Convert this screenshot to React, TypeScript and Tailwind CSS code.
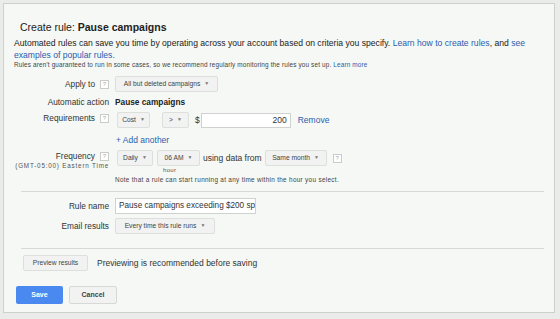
import { ReactNode } from "react";

function Help() {
  return (
    <span className="ml-[5px] inline-flex h-[9px] w-[9px] shrink-0 items-center justify-center border border-[#c9cdc9] bg-white text-[6px] leading-none text-[#aaa]">
      ?
    </span>
  );
}

function Caret() {
  return <span className="ml-[4px] text-[5px] text-[#777]">▼</span>;
}

function Btn({ children, className = "" }: { children: ReactNode; className?: string }) {
  return (
    <div
      className={`flex h-[16px] shrink-0 items-center justify-center whitespace-nowrap rounded-[2px] border border-[#dcdfdc] bg-[#f1f2f1] text-[6.7px] text-[#444] ${className}`}
    >
      {children}
    </div>
  );
}

function Row({
  label,
  help,
  sub,
  children,
  className = "",
}: {
  label: string;
  help?: boolean;
  sub?: string;
  children: ReactNode;
  className?: string;
}) {
  return (
    <div className={`flex ${className}`}>
      <div className="flex w-[95px] shrink-0 flex-col items-end">
        <div className="flex items-center whitespace-nowrap text-[8.3px] leading-[12px] text-[#333]">
          {label}
          {help ? <Help /> : null}
        </div>
        {sub && (
          <div className="whitespace-nowrap text-[6.3px] leading-[7px] tracking-[0.8px] text-[#555]">{sub}</div>
        )}
      </div>
      <div className="ml-[6px] flex-1">{children}</div>
    </div>
  );
}

export default function App() {
  return (
    <div className="h-[319px] w-[560px] bg-[#e9ece9] p-[3px] font-['Liberation_Sans',Arial,sans-serif]">
      <div className="h-[310px] w-[552px] border border-[#cdd1cd] bg-[#f5f8f4] px-[10px] pt-[17px]">
        <div className="ml-[6px] text-[10.5px] leading-[13px] text-[#222]">
          Create rule: <span className="font-bold">Pause campaigns</span>
        </div>
        <p className="mt-[3px] text-[8.6px] leading-[12px] text-[#222]">
          Automated rules can save you time by operating across your account based on criteria you specify.{" "}
          <span className="text-[#2a5db0]">Learn how to create rules</span>, and{" "}
          <span className="text-[#2a5db0]">see examples of popular rules.</span>
        </p>
        <p className="whitespace-nowrap text-[6.4px] leading-[7px] tracking-[0.15px] text-[#444]">
          Rules aren't guaranteed to run in some cases, so we recommend regularly monitoring the rules you set up.{" "}
          <span className="text-[#2a5db0]">Learn more</span>
        </p>

        <Row label="Apply to" help className="mt-[8px] items-center">
          <Btn className="w-[103px]">
            All but deleted campaigns <Caret />
          </Btn>
        </Row>

        <Row label="Automatic action" className="mt-[4px]">
          <div className="text-[8.3px] font-bold leading-[12px] text-[#222]">Pause campaigns</div>
        </Row>

        <Row label="Requirements" help className="mt-[4px]">
          <div className="flex items-center">
            <Btn className="ml-[2px] w-[33px]">
              Cost <Caret />
            </Btn>
            <Btn className="ml-[12px] w-[27px]">
              &gt; <Caret />
            </Btn>
            <span className="ml-[6px] text-[8.5px] text-[#333]">$</span>
            <div className="ml-[1px] flex h-[15px] w-[90px] items-center justify-end border border-[#cfd2cf] bg-white pr-[3px] text-[8.5px] text-[#333]">
              200
            </div>
            <span className="ml-[7px] text-[8.5px] text-[#2a5db0]">Remove</span>
          </div>
          <div className="ml-[1px] mt-[7px] text-[8.5px] leading-[11px] text-[#2a5db0]">+ Add another</div>
        </Row>

        <Row label="Frequency" help sub="(GMT-05:00) Eastern Time" className="mt-[4px]">
          <div className="flex items-center">
            <Btn className="ml-[2px] w-[36px]">
              Daily <Caret />
            </Btn>
            <Btn className="ml-[4px] w-[43px]">
              06 AM <Caret />
            </Btn>
            <span className="ml-[3px] whitespace-nowrap text-[8.5px] text-[#333]">using data from</span>
            <Btn className="ml-[3px] w-[62px]">
              Same month <Caret />
            </Btn>
            <span className="ml-[1px] flex">
              <Help />
            </span>
          </div>
          <div className="ml-[48px] mt-[1px] text-[6px] leading-[7px] tracking-[0.3px] text-[#555]">hour</div>
          <div className="mt-[1px] whitespace-nowrap text-[6.4px] leading-[9px] tracking-[0.3px] text-[#444]">
            Note that a rule can start running at any time within the hour you select.
          </div>
        </Row>

        <div className="ml-[7px] mt-[7px] border-t border-[#d6d9d6]" />

        <Row label="Rule name" className="mt-[6px] items-center">
          <div className="flex h-[16px] w-[141px] items-center overflow-hidden whitespace-nowrap border border-[#cfd2cf] bg-white px-[3px] text-[8.2px] text-[#333]">
            Pause campaigns exceeding $200 spend
          </div>
        </Row>

        <Row label="Email results" className="mt-[4px] items-center">
          <Btn className="w-[100px]">
            Every time this rule runs <Caret />
          </Btn>
        </Row>

        <div className="ml-[7px] mt-[14px] border-t border-[#d6d9d6]" />

        <div className="ml-[9px] mt-[6px] flex items-center">
          <Btn className="w-[65px]">Preview results</Btn>
          <span className="ml-[9px] whitespace-nowrap text-[8.5px] text-[#333]">
            Previewing is recommended before saving
          </span>
        </div>

        <div className="ml-[2px] mt-[15px] flex items-center gap-[6px]">
          <div className="flex h-[18px] w-[47px] items-center justify-center rounded-[2px] bg-[#4a8af0] text-[7px] font-bold text-white">
            Save
          </div>
          <div className="flex h-[18px] w-[48px] items-center justify-center rounded-[2px] border border-[#d6d9d6] bg-[#f1f2f1] text-[7px] font-bold text-[#444]">
            Cancel
          </div>
        </div>
      </div>
    </div>
  );
}
